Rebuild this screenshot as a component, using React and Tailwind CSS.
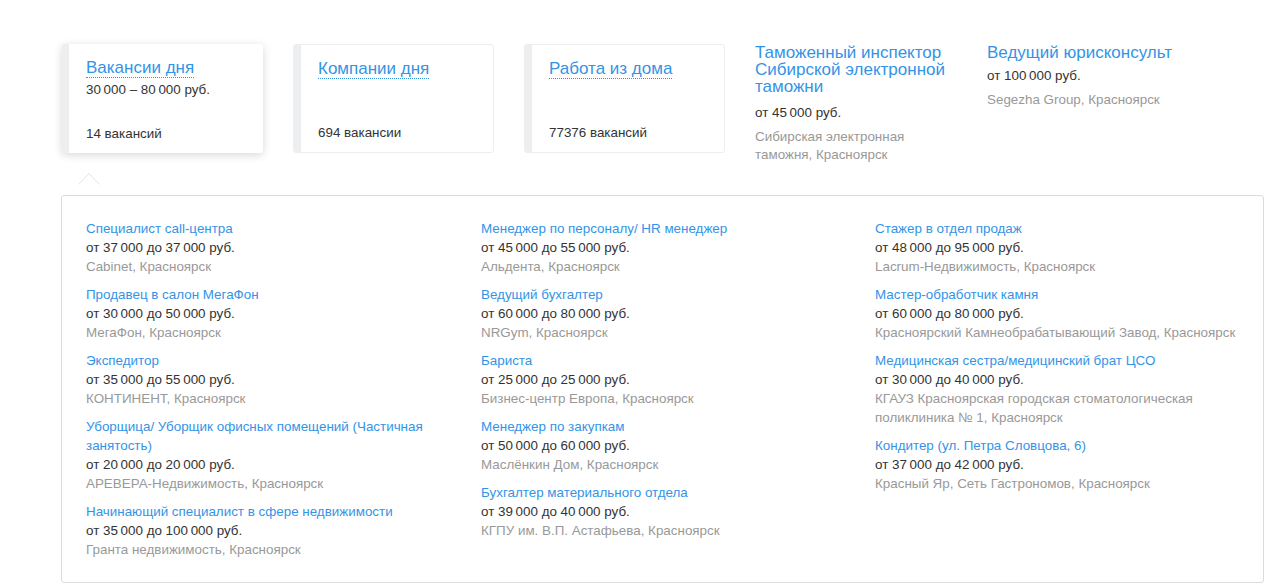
import React from 'react';

const n = (s) => s.replace(/(\d)(\d{3})(?!\d)/g, '$1\u2009$2');

const columns = [
  [
    { title: 'Специалист call-центра', salary: 'от 37000 до 37000 руб.', company: 'Cabinet, Красноярск' },
    { title: 'Продавец в салон МегаФон', salary: 'от 30000 до 50000 руб.', company: 'МегаФон, Красноярск' },
    { title: 'Экспедитор', salary: 'от 35000 до 55000 руб.', company: 'КОНТИНЕНТ, Красноярск' },
    { title: 'Уборщица/ Уборщик офисных помещений (Частичная занятость)', salary: 'от 20000 до 20000 руб.', company: 'АРЕВЕРА-Недвижимость, Красноярск' },
    { title: 'Начинающий специалист в сфере недвижимости', salary: 'от 35000 до 100000 руб.', company: 'Гранта недвижимость, Красноярск' },
  ],
  [
    { title: 'Менеджер по персоналу/ HR менеджер', salary: 'от 45000 до 55000 руб.', company: 'Альдента, Красноярск' },
    { title: 'Ведущий бухгалтер', salary: 'от 60000 до 80000 руб.', company: 'NRGym, Красноярск' },
    { title: 'Бариста', salary: 'от 25000 до 25000 руб.', company: 'Бизнес-центр Европа, Красноярск' },
    { title: 'Менеджер по закупкам', salary: 'от 50000 до 60000 руб.', company: 'Маслёнкин Дом, Красноярск' },
    { title: 'Бухгалтер материального отдела', salary: 'от 39000 до 40000 руб.', company: 'КГПУ им. В.П. Астафьева, Красноярск' },
  ],
  [
    { title: 'Стажер в отдел продаж', salary: 'от 48000 до 95000 руб.', company: 'Lacrum-Недвижимость, Красноярск' },
    { title: 'Мастер-обработчик камня', salary: 'от 60000 до 80000 руб.', company: 'Красноярский Камнеобрабатывающий Завод, Красноярск' },
    { title: 'Медицинская сестра/медицинский брат ЦСО', salary: 'от 30000 до 40000 руб.', company: 'КГАУЗ Красноярская городская стоматологическая поликлиника № 1, Красноярск' },
    { title: 'Кондитер (ул. Петра Словцова, 6)', salary: 'от 37000 до 42000 руб.', company: 'Красный Яр, Сеть Гастрономов, Красноярск' },
  ],
];

const tabs = [
  { title: 'Вакансии дня', salary: '30000 – 80000 руб.', count: '14 вакансий', active: true },
  { title: 'Компании дня', salary: '', count: '694 вакансии' },
  { title: 'Работа из дома', salary: '', count: '77376 вакансий' },
];

const TabCard = ({ tab }) => (
  <div
    className={
      'flex w-[201px] h-[109px] rounded-[3px] bg-white overflow-hidden ' +
      (tab.active
        ? 'shadow-[0_2px_9px_rgba(0,0,0,0.16)]'
        : 'border border-[#eeeeee]')
    }
  >
    <div className="w-[7px] shrink-0 bg-[#eceef0]" />
    <div className="flex flex-col justify-between pl-[17px] pt-[12px] pb-[10px]">
      <div>
        <span className="text-[17px] leading-[20px] text-[#3394e6] border-b border-dotted border-[#3394e6]">
          {tab.title}
        </span>
        {tab.salary && (
          <div className="mt-[1px] text-[13.4px] leading-[18px] text-[#333]">{n(tab.salary)}</div>
        )}
      </div>
      <div className="text-[13.4px] leading-[18px] text-[#333]">{tab.count}</div>
    </div>
  </div>
);

const FeaturedVacancy = ({ title, salary, company, width, gap }) => (
  <div className={width}>
    <div className="text-[17px] leading-[17px] text-[#3394e6]">{title}</div>
    <div className={gap + ' text-[13.4px] leading-[18px] text-[#333]'}>{n(salary)}</div>
    <div className="mt-[6px] text-[13.4px] leading-[18px] text-[#999]">{company}</div>
  </div>
);

export default function App() {
  return (
    <div
      className="min-h-[588px] bg-white pt-[44px] pl-[62px] pr-[16px]"
      style={{ fontFamily: '"Liberation Sans", Arial, sans-serif' }}
    >
      <div className="flex items-start">
        <div className="flex gap-[30px]">
          {tabs.map((tab) => (
            <TabCard key={tab.title} tab={tab} />
          ))}
        </div>
        <div className="ml-[30px]">
          <FeaturedVacancy
            width="w-[200px]"
            gap="mt-[9px]"
            title="Таможенный инспектор Сибирской электронной таможни"
            salary="от 45000 руб."
            company="Сибирская электронная таможня, Красноярск"
          />
        </div>
        <div className="ml-[32px]">
          <FeaturedVacancy
            width="w-[220px]"
            gap="mt-[6px]"
            title="Ведущий юрисконсульт"
            salary="от 100000 руб."
            company="Segezha Group, Красноярск"
          />
        </div>
      </div>

      {/* arrow pointing at the active tab */}
      <div className="ml-[16px] mt-[8px] h-[23px]">
        <svg width="22" height="13" viewBox="0 0 22 13" className="block">
          <polyline points="0.5,12.5 11,1.5 21.5,12.5" fill="none" stroke="#e3e3e3" strokeWidth="1" />
        </svg>
      </div>

      <div className="-ml-[1px] w-[1203px] rounded-[3px] border border-[#dcdcdc] pt-[23px] pb-[23px] pl-[24px] pr-[6px]">
        <div className="grid grid-cols-[395px_394px_1fr]">
          {columns.map((col, i) => (
            <div key={i} className={'flex flex-col gap-[9px] ' + (i < 2 ? 'pr-[20px]' : '')}>
              {col.map((v) => (
                <div key={v.title} className="text-[13.4px] leading-[19px]">
                  <div className="text-[#3394e6]">{v.title}</div>
                  <div className="text-[#333]">{n(v.salary)}</div>
                  <div className="text-[#999]">{v.company}</div>
                </div>
              ))}
            </div>
          ))}
        </div>
      </div>
    </div>
  );
}
